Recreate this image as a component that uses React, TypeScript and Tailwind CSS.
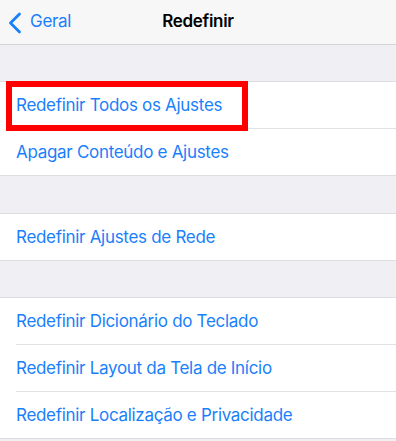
const font = { fontFamily: "Inter, 'Liberation Sans', sans-serif" };

function Row({ label, last }: { label: string; last?: boolean }) {
  return (
    <div className={"flex items-center pl-4 " + (last ? "h-[46px]" : "h-[47px]")}>
      <div
        className={
          "flex h-full w-full items-center pt-px text-[17px] tracking-[-0.3px] text-[#1a7ffb]" +
          (last ? "" : " border-b border-[#e2e2e6]")
        }
      >
        {label}
      </div>
    </div>
  );
}

function Group({ items, highlight }: { items: string[]; highlight?: boolean }) {
  return (
    <div className="relative border-y border-[#dedee2] bg-white">
      {items.map((label, i) => (
        <Row key={label} label={label} last={i === items.length - 1} />
      ))}
      {highlight && (
        <div className="absolute left-[6px] top-[-1px] h-[50px] w-[242px] border-[6px] border-[#ff0000]" />
      )}
    </div>
  );
}

export default function App() {
  return (
    <div className="h-[441px] w-[396px] overflow-hidden bg-[#efeff4]" style={font}>
      <div className="relative flex h-[45px] items-center border-b border-[#d4d4d8] bg-[#f7f7f7] px-2">
        <div className="flex items-center text-[#1a7ffb]">
          <svg width="14" height="22" viewBox="0 0 14 22" fill="none" className="mt-[1px]">
            <path d="M11.5 2 L2.5 11 L11.5 20" stroke="currentColor" strokeWidth="2.8" strokeLinecap="round" strokeLinejoin="round" />
          </svg>
          <span className="ml-[8px] text-[17px] tracking-[-0.3px]">Geral</span>
        </div>
        <div className="pointer-events-none absolute inset-x-0 text-center text-[17px] font-semibold tracking-[-0.3px] text-black">
          Redefinir
        </div>
      </div>
      <div className="h-[36px]" />
      <Group items={["Redefinir Todos os Ajustes", "Apagar Conteúdo e Ajustes"]} highlight />
      <div className="h-[37px]" />
      <Group items={["Redefinir Ajustes de Rede"]} />
      <div className="h-[36px]" />
      <Group
        items={[
          "Redefinir Dicionário do Teclado",
          "Redefinir Layout da Tela de Início",
          "Redefinir Localização e Privacidade",
        ]}
      />
    </div>
  );
}
